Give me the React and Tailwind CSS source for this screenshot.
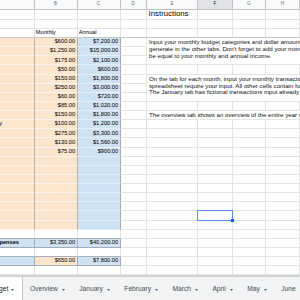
import React from 'react';

const base =
  'flex items-center overflow-hidden whitespace-nowrap border-r border-b px-[1.3px] text-[5.7px] leading-none text-black';

const cls = {
  plain: `${base} bg-white border-[#e2e3e3]`,
  plainDark: `${base} bg-white border-r-[#e2e3e3] border-b-[#c4c4c4]`,
  plainEdge: `${base} bg-white border-r-[#e2e3e3] border-b-[#a9b1b9]`,
  peach: `${base} bg-[#fce5cd] border-r-[#b8ada2] border-b-[#fbf2e9]`,
  blue: `${base} bg-[#cfe2f3] border-r-[#a2acb6] border-b-[#e6eef7]`,
  peachTotal: `${base} bg-[#fce5cd] border-r-[#a2acb6] border-b-[#a2acb6]`,
  blueTotal: `${base} bg-[#cfe2f3] border-r-[#a2acb6] border-b-[#a2acb6]`,
};

const expenses = [
  ['Rent', '$600.00', '$7,200.00'],
  ['Car', '$1,250.00', '$15,000.00'],
  ['Food', '$175.00', '$2,100.00'],
  ['Phone', '$50.00', '$600.00'],
  ['Gas', '$150.00', '$1,800.00'],
  ['Water', '$250.00', '$3,000.00'],
  ['Internet', '$60.00', '$720.00'],
  ['Gym', '$85.00', '$1,020.00'],
  ['Dining', '$150.00', '$1,800.00'],
  ['Electricity', '$100.00', '$1,200.00'],
  ['Loans', '$275.00', '$3,300.00'],
  ['Pets', '$130.00', '$1,560.00'],
  ['Misc', '$75.00', '$900.00'],
];

const tabs = ['Overview', 'January', 'February', 'March', 'April', 'May', 'June', 'July'];

const Caret = () => (
  <svg width="3" height="2" viewBox="0 0 3 2" className="shrink-0">
    <polygon points="0,0 3,0 1.5,2" fill="#5f6368" />
  </svg>
);

// column A is scrolled partly off-screen, labels start left of the viewport
const Label = ({ children, bold }) => (
  <span className={bold ? 'ml-[-23.6px] font-bold' : 'ml-[-23.6px]'}>{children}</span>
);

const para =
  'col-span-4 row-span-3 flex flex-col overflow-hidden whitespace-nowrap border-b border-[#e2e3e3] bg-white pl-[2px] pt-[1.4px] text-[6.15px] leading-[6.6px] text-[#111]';

function rowCells(r) {
  const cells = [];
  const k = (c) => `${r}-${c}`;

  // A, B, C
  if (r <= 2 || r === 29) {
    cells.push(<div key={k('a')} className={cls.plain} />);
    cells.push(<div key={k('b')} className={cls.plain} />);
    cells.push(<div key={k('c')} className={cls.plain} />);
  } else if (r === 3) {
    cells.push(<div key={k('a')} className={cls.plainDark} />);
    cells.push(<div key={k('b')} className={cls.plainDark}>Monthly</div>);
    cells.push(<div key={k('c')} className={cls.plainDark}>Annual</div>);
  } else if (r >= 4 && r <= 24) {
    const row = expenses[r - 4];
    cells.push(
      <div key={k('a')} className={cls.peach}>
        {row && <Label>{row[0]}</Label>}
      </div>
    );
    cells.push(<div key={k('b')} className={`${cls.peach} justify-end`}>{row && row[1]}</div>);
    cells.push(<div key={k('c')} className={`${cls.blue} justify-end`}>{row && row[2]}</div>);
  } else if (r === 25 || r === 27) {
    cells.push(<div key={k('a')} className={cls.plainEdge} />);
    cells.push(<div key={k('b')} className={cls.plainEdge} />);
    cells.push(<div key={k('c')} className={cls.plainEdge} />);
  } else if (r === 26) {
    cells.push(
      <div key={k('a')} className={cls.blueTotal}>
        <Label bold>Total Expenses</Label>
      </div>
    );
    cells.push(<div key={k('b')} className={`${cls.blueTotal} justify-end`}>$3,350.00</div>);
    cells.push(<div key={k('c')} className={`${cls.blueTotal} justify-end`}>$40,200.00</div>);
  } else if (r === 28) {
    cells.push(
      <div key={k('a')} className={cls.blueTotal}>
        <Label>Savings</Label>
      </div>
    );
    cells.push(<div key={k('b')} className={`${cls.peachTotal} justify-end`}>$650.00</div>);
    cells.push(<div key={k('c')} className={`${cls.blueTotal} justify-end`}>$7,800.00</div>);
  }

  // D
  cells.push(<div key={k('d')} className={r === 3 ? cls.plainDark : cls.plain} />);

  // E..H
  if (r === 5 || r === 6 || r === 9 || r === 10) return cells;

  if (r === 4) {
    cells.push(
      <div key={k('p1')} className={para}>
        <span>Input your monthly budget categories and dollar amounts here. These will automatically</span>
        <span>generate in the other tabs. Don't forget to add your monthly income. Your total should</span>
        <span>be equal to your monthly and annual income.</span>
      </div>
    );
    return cells;
  }
  if (r === 8) {
    cells.push(
      <div key={k('p2')} className={para}>
        <span>On the tab for each month, input your monthly transactions. Only the white cells in the</span>
        <span>spreadsheet require your input. All other cells contain formulas.</span>
        <span>The January tab has fictional transactions input already as an example.</span>
      </div>
    );
    return cells;
  }
  if (r === 12) {
    cells.push(
      <div key={k('p3')} className="col-span-4 flex items-center overflow-hidden whitespace-nowrap border-b border-[#e2e3e3] bg-white pl-[2px] text-[6.15px] leading-none text-[#111]">
        The overview tab shows an overview of the entire year so far.
      </div>
    );
    return cells;
  }

  const edge = r === 3 ? cls.plainDark : cls.plain;
  cells.push(
    <div key={k('e')} className={r === 1 ? `${edge} pl-[1.6px] text-[7.8px]` : edge}>
      {r === 1 ? 'Instructions' : null}
    </div>
  );
  if (r === 23) {
    cells.push(
      <div key={k('f')} className="relative z-10 border-r border-b border-[#e2e3e3] bg-white">
        <div className="absolute inset-[-1px] border border-[#5b8def]" />
        <div className="absolute bottom-[-2.5px] right-[-2.5px] h-[3px] w-[3px] bg-[#1a57c8]" />
      </div>
    );
  } else {
    cells.push(<div key={k('f')} className={edge} />);
  }
  cells.push(<div key={k('g')} className={edge} />);
  cells.push(<div key={k('h')} className={edge} />);
  return cells;
}

export default function App() {
  const headers = ['', 'B', 'C', 'D', 'E', 'F', 'G', 'H'];
  const rows = [];
  for (let r = 1; r <= 29; r++) rows.push(...rowCells(r));

  return (
    <div className="flex h-[300px] w-[300px] flex-col overflow-hidden bg-white font-['Liberation_Sans',Arial,sans-serif]">
      <div className="grid shrink-0 grid-cols-[34.5px_43px_43px_26.5px_51.3px_34.4px_33.3px_34px] grid-rows-[9.5px_10px_9.3px_9.3px_repeat(26,9.13px)]">
        {headers.map((h) => (
          <div
            key={'hd' + h}
            className={
              h === 'F'
                ? 'flex items-center justify-center border-r border-b border-[#c4c4c4] bg-[#e1e3e6] text-[4.6px] leading-none text-[#202124]'
                : 'flex items-center justify-center border-r border-b border-[#c4c4c4] bg-[#f8f9fa] text-[4.6px] leading-none text-[#6f7378]'
            }
          >
            {h}
          </div>
        ))}
        {rows}
      </div>

      <div className="flex flex-1 items-center overflow-hidden whitespace-nowrap border-t-2 border-[#d0d3d6] bg-[#f1f3f4] text-[6.7px] leading-none">
        <div className="ml-[-20.5px] flex h-full shrink-0 items-center gap-[2.5px] border-r border-[#c4c7c5] bg-white pl-[7.6px] pr-[7.9px] pt-[2px] text-[#202124]">
          <span>Budget</span>
          <Caret />
        </div>
        {tabs.map((t) => (
          <div key={t} className="flex h-full shrink-0 items-center gap-[4px] px-[7.2px] pt-[2px] text-[#4a4d51]">
            <span>{t}</span>
            <Caret />
          </div>
        ))}
      </div>
    </div>
  );
}
